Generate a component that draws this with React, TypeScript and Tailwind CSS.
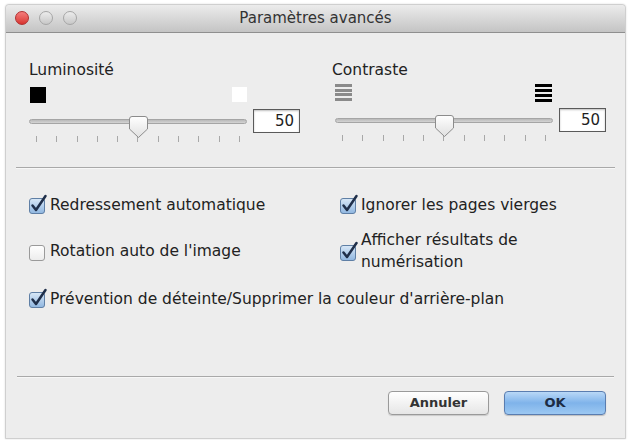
import React from "react";

const font = { fontFamily: '"DejaVu Sans", "Liberation Sans", sans-serif' };

const Thumb = () => (
    <svg width="21" height="24" viewBox="0 0 21 24" className="absolute -top-[5px]" style={{left: "calc(50% - 10px)"}}>
        <defs>
            <linearGradient id="tg" x1="0" y1="0" x2="0" y2="1">
                <stop offset="0" stopColor="#ffffff"/>
                <stop offset="1" stopColor="#e0e0e0"/>
            </linearGradient>
        </defs>
        <path d="M4 1.5 H17 Q19.5 1.5 19.5 4 V14 L10.5 22.5 L1.5 14 V4 Q1.5 1.5 4 1.5 Z" fill="url(#tg)" stroke="#8c8c8c" strokeWidth="1"/>
    </svg>
);

const Slider = ({value}: {value: string}) => (
    <div className="flex items-start gap-[6px]">
        <div className="w-[218px] pt-[10px]">
            <div className="relative h-[5px] rounded-full border border-[#a5a5a5] bg-gradient-to-b from-[#b9b9b9] to-[#d4d4d4]">
                <Thumb/>
            </div>
            <div className="flex justify-between px-[7px] mt-[12px]">
                {[0, 1, 2, 3, 4, 5, 6, 7, 8, 9, 10].map((i) => (
                    <div key={i} className="w-px h-[6px] bg-[#a8a8a8]"/>
                ))}
            </div>
        </div>
        <div className="w-[47px] h-[24px] border border-[#5a5a5a] bg-white shadow-[inset_0_1px_2px_rgba(0,0,0,0.25)] text-right pr-[5px] text-[15px] leading-[22px] text-[#1e1e1e]">
            {value}
        </div>
    </div>
);

const Bars = ({color, gap}: {color: string, gap: string}) => (
    <div className={`flex flex-col w-[17px] ${gap}`}>
        {[0, 1, 2, 3].map((i) => (
            <div key={i} className={`h-[3px] ${color}`}/>
        ))}
    </div>
);

const Check = ({checked}: {checked: boolean}) => (
    <svg width="19" height="21" viewBox="0 0 19 21" className="shrink-0">
        <defs>
            <linearGradient id="cb" x1="0" y1="0" x2="0" y2="1">
                <stop offset="0" stopColor="#d9e8f7"/>
                <stop offset="1" stopColor="#8fb6e0"/>
            </linearGradient>
            <linearGradient id="cw" x1="0" y1="0" x2="0" y2="1">
                <stop offset="0" stopColor="#ffffff"/>
                <stop offset="1" stopColor="#ececec"/>
            </linearGradient>
        </defs>
        <rect x="0.5" y="4.5" width="15" height="15" rx="2.5" fill={checked ? "url(#cb)" : "url(#cw)"} stroke={checked ? "#5f7fa5" : "#9a9a9a"}/>
        {checked && (
            <path d="M3.5 11.5 L7 16 L16.5 2" fill="none" stroke="#1f2f4a" strokeWidth="2.5" strokeLinecap="round" strokeLinejoin="round"/>
        )}
    </svg>
);

const Option = ({checked, children}: {checked: boolean, children: React.ReactNode}) => (
    <div className="flex items-center gap-[2px] text-[15.5px] leading-[18px] text-[#222]">
        <Check checked={checked}/>
        <span>{children}</span>
    </div>
);

export default function App() {
    return (
        <div className="w-[628px] h-[440px] bg-white pt-[4px] pl-[5px] pr-[2px] overflow-hidden" style={font}>
            <div className="h-[435px] flex flex-col bg-[#ededed] border border-[#cfcfcf] rounded-t-[4px] shadow-[0_0_2px_rgba(0,0,0,0.15)]">
                <div className="relative h-[28px] shrink-0 flex items-center justify-center rounded-t-[4px] bg-gradient-to-b from-[#ececec] to-[#c4c4c4] border-b border-[#8f8f8f]">
                    <div className="absolute left-[9px] top-[6px] flex gap-[10px]">
                        <div className="w-[14px] h-[14px] rounded-full bg-gradient-to-b from-[#f47c7c] to-[#d8322f] border border-[#b03030]"/>
                        <div className="w-[14px] h-[14px] rounded-full bg-gradient-to-b from-[#ececec] to-[#c8c8c8] border border-[#a6a6a6]"/>
                        <div className="w-[14px] h-[14px] rounded-full bg-gradient-to-b from-[#ececec] to-[#c8c8c8] border border-[#a6a6a6]"/>
                    </div>
                    <span className="text-[15px] text-[#333]">Paramètres avancés</span>
                </div>

                <div className="flex gap-[32px] pl-[23px] pt-[28px]">
                    <div className="flex flex-col">
                        <div className="text-[15.5px] leading-[18px] text-[#222]">Luminosité</div>
                        <div className="flex justify-between w-[218px] pl-[1px] mt-[8px]">
                            <div className="w-[16px] h-[16px] bg-black"/>
                            <div className="w-[15px] h-[15px] bg-white"/>
                        </div>
                        <div className="mt-[6px]">
                            <Slider value="50"/>
                        </div>
                    </div>
                    <div className="flex flex-col">
                        <div className="text-[15.5px] leading-[18px] text-[#222]">Contraste</div>
                        <div className="flex justify-between w-[220px] pl-[3px] mt-[5px]">
                            <Bars color="bg-[#8a8a8a]" gap="gap-[1.5px]"/>
                            <Bars color="bg-black" gap="gap-[2px]"/>
                        </div>
                        <div className="mt-[6px] pl-[3px]">
                            <Slider value="50"/>
                        </div>
                    </div>
                </div>

                <div className="mx-[10px] mt-[25px] h-[2px] border-t border-[#a9a9a9] bg-[#f7f7f7]"/>

                <div className="grid grid-cols-[311px_1fr] items-center pl-[23px] mt-[25px] gap-y-[14px]">
                    <Option checked>Redressement automatique</Option>
                    <Option checked>Ignorer les pages vierges</Option>
                    <Option checked={false}>Rotation auto de l'image</Option>
                    <div className="flex items-center gap-[2px] text-[15.5px] leading-[22px] text-[#222]">
                        <Check checked/>
                        <span>Afficher résultats de<br/>numérisation</span>
                    </div>
                    <div className="col-span-2 mt-[1px]">
                        <Option checked>Prévention de déteinte/Supprimer la couleur d'arrière-plan</Option>
                    </div>
                </div>

                <div className="flex-1"/>

                <div className="mx-[11px] h-[2px] border-t border-[#a9a9a9] bg-[#f7f7f7]"/>

                <div className="flex justify-end gap-[15px] pr-[19px] pt-[13px] pb-[23px]">
                    <button className="w-[101px] h-[24px] rounded-[4px] border border-[#9a9a9a] bg-gradient-to-b from-white to-[#e6e6e6] shadow-[0_1px_1px_rgba(0,0,0,0.15)] text-[13px] font-bold text-[#333]">
                        Annuler
                    </button>
                    <button className="w-[102px] h-[24px] rounded-[4px] border border-[#5a7db0] bg-gradient-to-b from-[#b9d8f7] via-[#7fb3ea] to-[#9cc8f2] shadow-[0_1px_1px_rgba(0,0,0,0.2)] text-[13px] font-bold text-[#1d2c44]">
                        OK
                    </button>
                </div>
            </div>
        </div>
    );
}
